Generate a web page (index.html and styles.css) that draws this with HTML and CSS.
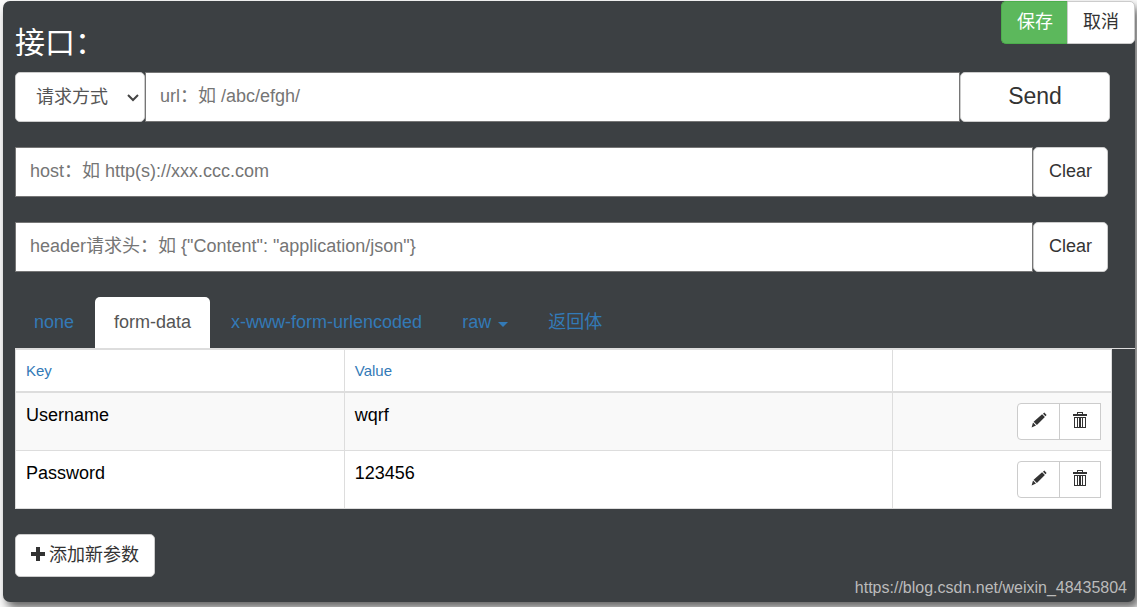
FILE: index.html
```html
<!DOCTYPE html>
<html lang="zh-CN">
<head>
<meta charset="utf-8">
<meta name="viewport" content="width=device-width, initial-scale=1">
<title>接口</title>
<link rel="stylesheet" href="styles.css">
</head>
<body>
<svg class="sprite" aria-hidden="true">
  <symbol id="pencil" viewBox="0 0 16 16">
    <path d="M12 1.7L13.3.6l2.3 2.3-1.2 1.3zM11.1 2.3l2.8 2.8-8 7.8-3.3-3.2zM2 10.6l3 3L.6 15.4z"/>
  </symbol>
  <symbol id="trash" viewBox="0 0 16 16">
    <path fill-rule="evenodd" d="M5 0h6v2h4v2H1V2h4zM6 1v1h4V1zM2 5h12v11H2zM3 6v9h2V6zM6 6v9h1V6zM9 6v9h1V6zM11 6v9h2V6z"/>
  </symbol>
  <symbol id="plus" viewBox="0 0 14 14">
    <path d="M5 0h4v5h5v4H9v5H5V9H0V5h5z"/>
  </symbol>
</svg>
<main class="panel">
  <header class="header">
    <h1 class="title">接口：</h1>
    <div class="actions">
      <button class="btn btn-save" type="button">保存</button>
      <button class="btn btn-cancel" type="button">取消</button>
    </div>
  </header>
  <form class="form">
    <div class="row row-send">
      <div class="method">
        <select class="select" aria-label="请求方式"><option>请求方式</option></select>
        <svg class="chevron" viewBox="0 0 12 8" aria-hidden="true"><path d="M1 1l5 5 5-5"/></svg>
      </div>
      <input class="field" type="text" aria-label="url" placeholder="url：如 /abc/efgh/">
      <button class="btn btn-send" type="button">Send</button>
    </div>
    <div class="row">
      <input class="field" type="text" aria-label="host" placeholder="host：如 http(s)://xxx.ccc.com">
      <button class="btn btn-clear" type="button">Clear</button>
    </div>
    <div class="row">
      <input class="field" type="text" aria-label="header请求头" placeholder="header请求头：如 {&quot;Content&quot;: &quot;application/json&quot;}">
      <button class="btn btn-clear" type="button">Clear</button>
    </div>
  </form>
  <nav class="tabs">
    <a class="tab" href="#none">none</a>
    <a class="tab active" href="#form-data">form-data</a>
    <a class="tab" href="#urlencoded">x-www-form-urlencoded</a>
    <a class="tab" href="#raw">raw <span class="caret"></span></a>
    <a class="tab" href="#response">返回体</a>
  </nav>
  <div class="params">
    <table class="table">
      <colgroup><col class="col-key"><col class="col-value"><col class="col-tools"></colgroup>
      <thead><tr><th>Key</th><th>Value</th><th></th></tr></thead>
      <tbody>
        <tr><td>Username</td><td>wqrf</td><td><div class="tools">
          <button class="tool" type="button" aria-label="编辑"><svg class="icon"><use href="#pencil"/></svg></button>
          <button class="tool" type="button" aria-label="删除"><svg class="icon"><use href="#trash"/></svg></button>
        </div></td></tr>
        <tr><td>Password</td><td>123456</td><td><div class="tools">
          <button class="tool" type="button" aria-label="编辑"><svg class="icon"><use href="#pencil"/></svg></button>
          <button class="tool" type="button" aria-label="删除"><svg class="icon"><use href="#trash"/></svg></button>
        </div></td></tr>
      </tbody>
    </table>
    <button class="btn btn-add" type="button"><svg class="plus" aria-hidden="true"><use href="#plus"/></svg>添加新参数</button>
  </div>
  <span class="watermark">https://blog.csdn.net/weixin_48435804</span>
</main>
</body>
</html>
```
FILE: styles.css
```css
* { box-sizing: border-box; }

body {
  margin: 0;
  padding: 1px 2px 5px 3px;
  min-height: 100vh;
  display: flex;
  background: #fafafa;
  font: 18px/25px "Liberation Sans", Arial, "Noto Sans CJK SC", sans-serif;
  color: #333;
}

button, input, select { font: inherit; color: inherit; margin: 0; }

.sprite { position: absolute; width: 0; height: 0; }

.panel {
  position: relative;
  flex: 1;
  min-width: 0;
  background: #3c4043;
  border-radius: 7px;
  box-shadow: 4px 6px 10px rgba(0, 0, 0, .6);
  padding-bottom: 25px;
}

.header {
  display: flex;
  justify-content: space-between;
  align-items: flex-start;
  height: 71px;
  padding-left: 12px;
}

.title {
  margin: 24px 0 0;
  font-size: 30px;
  line-height: 36px;
  font-weight: 400;
  color: #fff;
}

.actions { display: flex; }

.btn {
  background: #fff;
  border: 1px solid #ccc;
  border-radius: 5px;
  padding: 0 15px;
  white-space: nowrap;
}

.btn-save, .btn-cancel { height: 43px; }
.btn-save {
  padding-right: 14px;
  background: #5cb85c;
  border-color: #4cae4c;
  border-right: 0;
  border-radius: 5px 0 0 5px;
  color: #fff;
}
.btn-cancel { border-radius: 0 5px 5px 0; }

.form {
  display: grid;
  gap: 25px;
  padding: 0 27px 25px 12px;
}

.row { display: flex; height: 50px; }
.row-send { margin-right: -2px; }

.method { position: relative; width: 130px; }

.select {
  appearance: none;
  width: 100%;
  height: 100%;
  padding: 0 20px;
  border: 1px solid #ccc;
  border-radius: 5px;
  background: #fff;
  color: #555;
}

.chevron {
  position: absolute;
  right: 6px;
  top: 22px;
  width: 12px;
  height: 8px;
  fill: none;
  stroke: #444;
  stroke-width: 2;
  pointer-events: none;
}

.field {
  flex: 1;
  min-width: 0;
  padding: 0 14px 2px;
  border: 1px solid #767676;
  border-radius: 0;
  background: #fff;
}
.field::placeholder { color: #757575; opacity: 1; }

.btn-send { width: 150px; padding-bottom: 2px; font-size: 23px; }
.btn-clear { width: 75px; padding-bottom: 2px; }

.tabs {
  display: flex;
  gap: 2px;
  margin-left: 12px;
  border-bottom: 1px solid #ddd;
}

.tab {
  display: flex;
  align-items: center;
  padding: 13px 19px;
  border-radius: 5px 5px 0 0;
  color: #337ab7;
  text-decoration: none;
}
.tab.active { background: #fff; color: #555; }

.caret {
  margin-left: 7px;
  margin-top: 3px;
  border: 5px solid transparent;
  border-top-color: #337ab7;
  border-bottom: 0;
}

.params { padding: 0 23px 0 12px; }

.table {
  width: 100%;
  margin-bottom: 25px;
  table-layout: fixed;
  border-collapse: collapse;
  background: #fff;
  color: #000;
}
.col-key { width: 30%; }
.col-value { width: 50%; }
.col-tools { width: 20%; }

.table th, .table td {
  padding: 10px;
  border: 1px solid #ddd;
  text-align: left;
  vertical-align: top;
}
.table th {
  padding-bottom: 9px;
  border-bottom-width: 2px;
  font-size: 15px;
  line-height: 22px;
  font-weight: 400;
  color: #337ab7;
}
.table tbody tr:nth-child(odd) { background: #f9f9f9; }

.tools { display: flex; justify-content: flex-end; }

.tool {
  display: flex;
  align-items: center;
  justify-content: center;
  width: 42px;
  height: 37px;
  padding: 0 0 3px;
  border: 1px solid #ccc;
  background: #fff;
}
.tool:first-child { width: 43px; margin-right: -1px; border-radius: 4px 0 0 4px; }

.icon { width: 16px; height: 16px; fill: #333; }

.btn-add {
  display: flex;
  align-items: center;
  gap: 4px;
  height: 43px;
}
.plus { width: 14px; height: 14px; margin-bottom: 4px; fill: #333; }

.watermark {
  position: absolute;
  right: 8px;
  bottom: 4px;
  font-size: 16px;
  line-height: 20px;
  color: #bbb;
}
```
